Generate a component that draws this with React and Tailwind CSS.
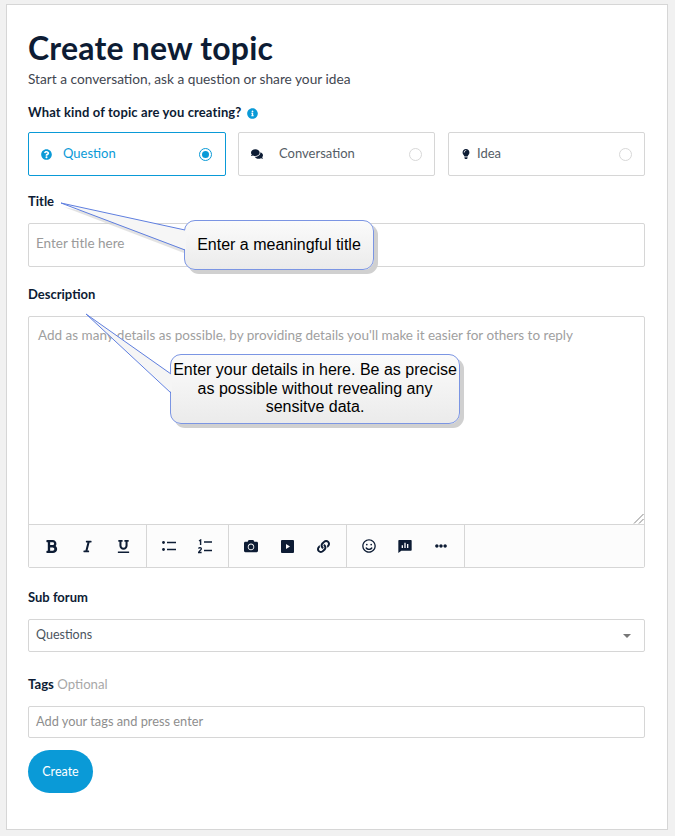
import {
  FaBold,
  FaItalic,
  FaUnderline,
  FaCamera,
  FaLink,
  FaRegSmile,
  FaEllipsisH,
  FaQuestionCircle,
  FaComments,
  FaLightbulb,
  FaInfoCircle
} from "react-icons/fa";
import { RiChatPollFill } from "react-icons/ri";

function PlayBox() {
  return (
    <svg width="13" height="13" viewBox="0 0 13 13">
      <path
        fillRule="evenodd"
        d="M1 0h11a1 1 0 0 1 1 1v11a1 1 0 0 1-1 1H1a1 1 0 0 1-1-1V1a1 1 0 0 1 1-1zM5 4v5l4-2.5z"
        fill="currentColor"
      />
    </svg>
  );
}

function BulletList() {
  return (
    <svg width="14" height="12" viewBox="0 0 14 12" fill="none">
      <circle cx="1.5" cy="2.5" r="1.4" fill="currentColor" />
      <circle cx="1.5" cy="9.5" r="1.4" fill="currentColor" />
      <path d="M5 2.5h9M5 9.5h9" stroke="currentColor" strokeWidth="1.5" />
    </svg>
  );
}

function NumberList() {
  return (
    <svg width="14" height="15" viewBox="0 0 14 15" fill="none">
      <path d="M1 2l1.6-1v5" stroke="currentColor" strokeWidth="1.4" />
      <path
        d="M.6 9.6c.3-1.2 2.8-1.2 2.8.2 0 1.2-2.4 2.2-2.8 3.7h3"
        stroke="currentColor"
        strokeWidth="1.3"
      />
      <path d="M6 3h8M6 11.5h8" stroke="currentColor" strokeWidth="1.5" />
    </svg>
  );
}

function TypeCard({ icon, label, active, className, gap }) {
  return (
    <div
      className={`flex items-center h-[44px] pl-[12px] rounded-[2px] border ${className} ${
        active ? "pr-[13px] border-[#0a9ad7] text-[#0a9ad7]" : "pr-[12px] border-[#d6d6d6] text-[#555d66]"
      }`}
    >
      <span className={`flex items-center ${gap} ${active ? "text-[#0a9ad7]" : "text-[#0d1c34]"}`}>
        {icon}
      </span>
      <span className="text-[13px] flex-1">{label}</span>
      {active ? (
        <span className="flex items-center justify-center w-[13px] h-[13px] rounded-full border border-[#0a9ad7]">
          <span className="w-[7px] h-[7px] rounded-full bg-[#0a9ad7]" />
        </span>
      ) : (
        <span className="w-[13px] h-[13px] rounded-full border border-[#d8d8d8]" />
      )}
    </div>
  );
}

function ToolGroup({ children }) {
  return (
    <div className="flex items-center pl-[4px] pr-[5px] border-r border-[#d6d6d6] text-[#0d1c34]">
      {children}
    </div>
  );
}

function ToolButton({ children }) {
  return <span className="flex items-center justify-center w-[36px] h-[43px]">{children}</span>;
}

export default function App() {
  return (
    <div className="relative w-[694px] h-[836px] bg-white font-['Lato',sans-serif] overflow-hidden">
      <div className="w-[675px] h-[836px] bg-[#f1f1f1] pt-[4px] pl-[6px]">
        <div className="w-[662px] h-[826px] bg-white border border-[#d6d6d6] pl-[21px] pr-[22px] pt-[24px]">
          <h1 className="text-[32px] leading-[38px] font-bold tracking-[0.2px] text-[#0d1c34]">
            Create new topic
          </h1>
          <p className="mt-[2px] text-[13.7px] leading-[20px] text-[#3f4650]">
            Start a conversation, ask a question or share your idea
          </p>

          <div className="mt-[14px] flex items-center gap-[6px] h-[20px]">
            <span className="text-[13px] font-bold tracking-[0.12px] text-[#0d1c34]">
              What kind of topic are you creating?
            </span>
            <FaInfoCircle className="text-[11px] text-[#0a9ad7]" />
          </div>

          <div className="mt-[9px] flex gap-[12px]">
            <TypeCard
              active
              label="Question"
              className="w-[198px]"
              gap="w-[22px]"
              icon={<FaQuestionCircle className="text-[11px]" />}
            />
            <TypeCard
              label="Conversation"
              className="w-[197px]"
              gap="w-[28px]"
              icon={<FaComments className="text-[12px]" />}
            />
            <TypeCard
              label="Idea"
              className="w-[197px] ml-[1px]"
              gap="w-[16px]"
              icon={<FaLightbulb className="text-[10px]" />}
            />
          </div>

          <label className="block mt-[15px] text-[13px] leading-[20px] font-bold text-[#0d1c34]">Title</label>
          <div className="mt-[12px] h-[44px] flex items-center px-[7px] pb-[3px] rounded-[2px] border border-[#d6d6d6] text-[13.5px] text-[#9a9a9a]">
            Enter title here
          </div>

          <label className="block mt-[17px] text-[13px] leading-[20px] font-bold text-[#0d1c34]">
            Description
          </label>
          <div className="mt-[12px] h-[252px] flex flex-col rounded-[2px] border border-[#d6d6d6]">
            <div className="relative flex-1 px-[9px] pt-[8px] text-[13.5px] leading-[20px] text-[#a0a0a0]">
              Add as many details as possible, by providing details you'll make it easier for others to reply
              <svg className="absolute right-0 bottom-0" width="11" height="11" viewBox="0 0 11 11">
                <path d="M10.5 1L1 10.5M10.5 6L6 10.5" stroke="#666" strokeWidth="0.8" />
              </svg>
            </div>
            <div className="flex h-[43px] bg-[#fcfcfc] border-t border-[#d6d6d6]">
              <ToolGroup>
                <ToolButton><FaBold className="text-[15px]" /></ToolButton>
                <ToolButton><FaItalic className="text-[13px]" /></ToolButton>
                <ToolButton><FaUnderline className="text-[13px]" /></ToolButton>
              </ToolGroup>
              <ToolGroup>
                <ToolButton><BulletList /></ToolButton>
                <ToolButton><NumberList /></ToolButton>
              </ToolGroup>
              <ToolGroup>
                <ToolButton><FaCamera className="text-[14px]" /></ToolButton>
                <ToolButton><PlayBox /></ToolButton>
                <ToolButton><FaLink className="text-[13px]" /></ToolButton>
              </ToolGroup>
              <ToolGroup>
                <ToolButton><FaRegSmile className="text-[14px]" /></ToolButton>
                <ToolButton><RiChatPollFill className="text-[16px]" /></ToolButton>
                <ToolButton><FaEllipsisH className="text-[12px]" /></ToolButton>
              </ToolGroup>
            </div>
          </div>

          <label className="block mt-[19px] text-[13px] leading-[20px] font-bold text-[#0d1c34]">Sub forum</label>
          <div className="mt-[12px] h-[33px] flex items-center justify-between pl-[7px] pr-[13px] rounded-[2px] border border-[#d6d6d6] text-[12.5px] text-[#4b5560]">
            Questions
            <span className="w-0 h-0 border-x-[4px] border-x-transparent border-t-[4px] border-t-[#777]" />
          </div>

          <label className="block mt-[22px] text-[13.2px] leading-[20px] text-[#a8a8a8]">
            <span className="font-bold text-[#0d1c34]">Tags</span> Optional
          </label>
          <div className="mt-[12px] h-[32px] flex items-center px-[7px] rounded-[2px] border border-[#d6d6d6] text-[12.8px] text-[#8e8e8e]">
            Add your tags and press enter
          </div>

          <button className="block mt-[12px] w-[65px] h-[43px] pt-[1px] rounded-full bg-[#0a9ad7] text-white text-[12.5px]">
            Create
          </button>
        </div>
      </div>

      {/* callouts drawn over the form */}
      <div className="absolute left-[184px] top-[220px] w-[190px] h-[50px] flex items-center justify-center rounded-[11px] border-[1.5px] border-[#7b95e3] bg-gradient-to-b from-[#fbfbfb] to-[#ebebeb] shadow-[4px_4px_0_#d0d0d0] font-['Liberation_Sans',sans-serif] text-[16px] text-black">
        Enter a meaningful title
      </div>
      <div className="absolute left-[170px] top-[354px] w-[290px] h-[70px] flex items-center justify-center text-center rounded-[11px] border-[1.5px] border-[#7b95e3] bg-gradient-to-b from-[#fbfbfb] to-[#ebebeb] shadow-[4px_4px_0_#d0d0d0] font-['Liberation_Sans',sans-serif] text-[16px] leading-[18.5px] text-black">
        Enter your details in here. Be as precise
        <br />
        as possible without revealing any
        <br />
        sensitve data.
      </div>
      <svg className="absolute left-0 top-0 pointer-events-none" width="694" height="836" fill="none">
        <path d="M64 207 L184 253 L184 234 Z" fill="#d0d0d0" opacity="0.6" />
        <path d="M61 203 L186 230 L186 250 Z" fill="#f6f6f6" />
        <path d="M61 203 L185 230 M61 203 L185 250" stroke="#5f7fe0" strokeWidth="1" />
        <path d="M86 314 L172 374 L172 393 Z" fill="#f5f5f5" />
        <path d="M86 314 L171 374 M86 314 L171 393" stroke="#5f7fe0" strokeWidth="1" />
      </svg>
    </div>
  );
}
